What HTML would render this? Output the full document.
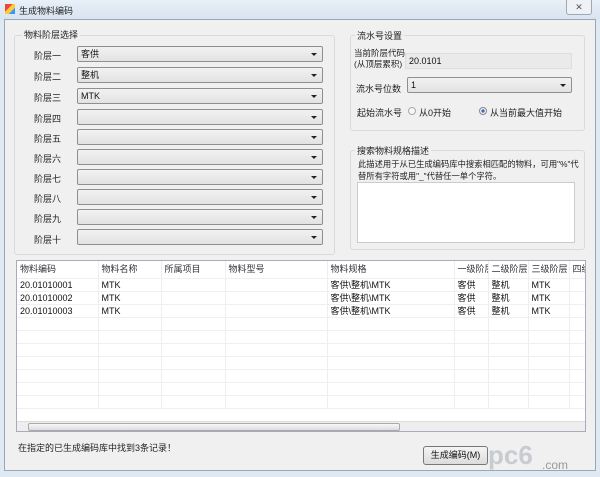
<!DOCTYPE html>
<html><head><meta charset="utf-8"><style>
*{box-sizing:border-box;margin:0;padding:0}
body{width:600px;height:477px;overflow:hidden;background:#dfe9f3;font-family:"Liberation Sans","Noto Sans CJK SC",sans-serif;font-size:9px;color:#111;position:relative}
.abs{position:absolute}
.win{left:4px;top:19px;width:592px;height:452px;background:#f0f0f0;border:1px solid #9aa7b5}
.gb{border:1px solid #d5dbe0;border-radius:3px}
.lbl{position:absolute;font-size:9px;color:#222;white-space:nowrap}
.cb{position:absolute;height:16px;border:1px solid #8e8f8f;border-radius:2px;background:linear-gradient(#f2f2f2,#e2e2e2);padding-left:3px;line-height:14px;font-size:9px}
.cb:after{content:"";position:absolute;right:5px;top:6px;border-left:3px solid transparent;border-right:3px solid transparent;border-top:3px solid #222}
table{border-collapse:collapse;font-size:9px}
td{height:13px;line-height:12px;border-right:1px solid #eee;border-bottom:1px solid #f0f0f0;padding-left:3px;white-space:nowrap;overflow:hidden}
</style></head><body>
<div class="abs" style="left:0;top:0;width:600px;height:19px;background:linear-gradient(#e8f0f8,#d8e4f0)"></div>
<div class="abs" style="left:5px;top:4px;width:10px;height:10px;background:linear-gradient(135deg,#e44 0 40%,#fc3 40% 70%,#39f 70%)"></div>
<div class="lbl" style="left:19px;top:4px">生成物料编码</div>
<div class="abs" style="left:566px;top:0;width:26px;height:15px;border:1px solid #a0a8b0;border-top:none;border-radius:0 0 3px 3px;background:#eef2f6;text-align:center;font-size:9px;line-height:14px;color:#555">✕</div>
<div class="abs win"></div>
<div class="abs gb" style="left:14px;top:35px;width:321px;height:220px"></div>
<div class="lbl" style="left:22px;top:28px;background:#f0f0f0;padding:0 2px">物料阶层选择</div>
<div class="lbl" style="left:34px;top:49px">阶层一</div><div class="cb" style="left:77px;top:46px;width:246px">客供</div>
<div class="lbl" style="left:34px;top:70px">阶层二</div><div class="cb" style="left:77px;top:67px;width:246px">整机</div>
<div class="lbl" style="left:34px;top:91px">阶层三</div><div class="cb" style="left:77px;top:88px;width:246px">MTK</div>
<div class="lbl" style="left:34px;top:112px">阶层四</div><div class="cb" style="left:77px;top:109px;width:246px"></div>
<div class="lbl" style="left:34px;top:132px">阶层五</div><div class="cb" style="left:77px;top:129px;width:246px"></div>
<div class="lbl" style="left:34px;top:152px">阶层六</div><div class="cb" style="left:77px;top:149px;width:246px"></div>
<div class="lbl" style="left:34px;top:172px">阶层七</div><div class="cb" style="left:77px;top:169px;width:246px"></div>
<div class="lbl" style="left:34px;top:192px">阶层八</div><div class="cb" style="left:77px;top:189px;width:246px"></div>
<div class="lbl" style="left:34px;top:212px">阶层九</div><div class="cb" style="left:77px;top:209px;width:246px"></div>
<div class="lbl" style="left:34px;top:233px">阶层十</div><div class="cb" style="left:77px;top:229px;width:246px"></div>

<div class="abs gb" style="left:350px;top:35px;width:235px;height:96px"></div>
<div class="lbl" style="left:355px;top:29px;background:#f0f0f0;padding:0 2px">流水号设置</div>
<div class="lbl" style="left:354px;top:48px;line-height:11px;font-size:8.5px">当前阶层代码<br>(从顶层累积)</div>
<div class="abs" style="left:405px;top:53px;width:167px;height:16px;background:#eaeaea;border:1px solid #ddd;padding-left:3px;line-height:14px">20.0101</div>
<div class="lbl" style="left:356px;top:82px">流水号位数</div><div class="cb" style="left:407px;top:77px;width:165px">1</div>
<div class="lbl" style="left:357px;top:106px">起始流水号</div>
<div class="abs" style="left:408px;top:107px;width:8px;height:8px;border:1px solid #aaa;border-radius:50%;background:#f6f6f6"></div>
<div class="lbl" style="left:419px;top:106px">从0开始</div>
<div class="abs" style="left:479px;top:107px;width:8px;height:8px;border:1px solid #888;border-radius:50%;background:radial-gradient(#3a6fb0 35%,#eef 45%)"></div>
<div class="lbl" style="left:490px;top:106px">从当前最大值开始</div>

<div class="abs gb" style="left:350px;top:150px;width:235px;height:100px"></div>
<div class="lbl" style="left:355px;top:144px;background:#f0f0f0;padding:0 2px">搜索物料规格描述</div>
<div class="lbl" style="left:358px;top:158px;line-height:12px;font-size:8.3px">此描述用于从已生成编码库中搜索相匹配的物料，可用"%"代<br>替所有字符或用"_"代替任一单个字符。</div>
<div class="abs" style="left:357px;top:182px;width:218px;height:61px;background:#fff;border:1px solid #ccc"></div>

<div class="abs" style="left:16px;top:260px;width:570px;height:172px;background:#fff;border:1px solid #aab;overflow:hidden">
<table style="width:650px;table-layout:fixed">
<colgroup><col style="width:81px"><col style="width:63px"><col style="width:64px"><col style="width:102px"><col style="width:127px"><col style="width:34px"><col style="width:40px"><col style="width:41px"><col style="width:98px"></colgroup>
<tr style="color:#333"><td style="height:17px">物料编码</td><td>物料名称</td><td>所属项目</td><td>物料型号</td><td>物料规格</td><td>一级阶层</td><td>二级阶层</td><td>三级阶层</td><td>四级</td></tr>
<tr><td>20.01010001</td><td>MTK</td><td></td><td></td><td>客供\整机\MTK</td><td>客供</td><td>整机</td><td>MTK</td><td></td></tr>
<tr><td>20.01010002</td><td>MTK</td><td></td><td></td><td>客供\整机\MTK</td><td>客供</td><td>整机</td><td>MTK</td><td></td></tr>
<tr><td>20.01010003</td><td>MTK</td><td></td><td></td><td>客供\整机\MTK</td><td>客供</td><td>整机</td><td>MTK</td><td></td></tr>
<tr><td></td><td></td><td></td><td></td><td></td><td></td><td></td><td></td><td></td></tr>
<tr><td></td><td></td><td></td><td></td><td></td><td></td><td></td><td></td><td></td></tr>
<tr><td></td><td></td><td></td><td></td><td></td><td></td><td></td><td></td><td></td></tr>
<tr><td></td><td></td><td></td><td></td><td></td><td></td><td></td><td></td><td></td></tr>
<tr><td></td><td></td><td></td><td></td><td></td><td></td><td></td><td></td><td></td></tr>
<tr><td></td><td></td><td></td><td></td><td></td><td></td><td></td><td></td><td></td></tr>
<tr><td></td><td></td><td></td><td></td><td></td><td></td><td></td><td></td><td></td></tr>
</table>
<div class="abs" style="left:0;top:160px;width:570px;height:11px;background:#eee;border-top:1px solid #ddd"></div>
<div class="abs" style="left:11px;top:162px;width:372px;height:8px;background:linear-gradient(#f8f8f8,#ddd);border:1px solid #aaa;border-radius:2px"></div>
</div>
<div class="lbl" style="left:18px;top:441px">在指定的已生成编码库中找到3条记录！</div>
<div class="abs" style="left:423px;top:446px;width:65px;height:19px;border:1px solid #777;border-radius:3px;background:linear-gradient(#f4f4f4,#dcdcdc);text-align:center;line-height:17px">生成编码(M)</div>
<div class="lbl" style="left:488px;top:440px;font-size:26px;color:#c8ccd0;font-weight:bold">pc6</div>
<div class="lbl" style="left:542px;top:458px;font-size:12px;color:#999">.com</div>
</body></html>
